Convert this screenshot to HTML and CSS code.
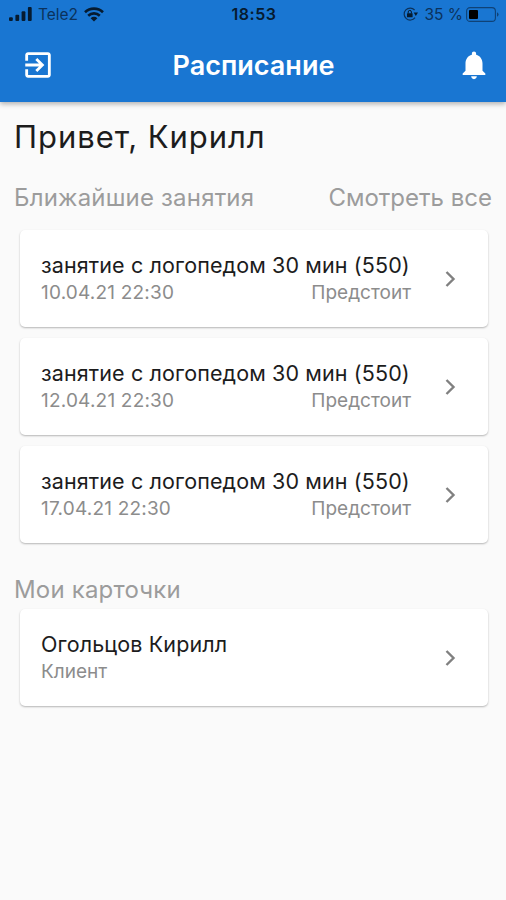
FILE: index.html
```html
<!DOCTYPE html>
<html lang="ru">
  <head>
    <meta charset="UTF-8" />
    <meta name="viewport" content="width=device-width, initial-scale=1.0" />
    <title>Расписание</title>
    <link rel="stylesheet" href="styles.css">
  </head>
  <body>
    <header>
      <div class="status">
        <div class="carrier">
          <svg class="signal" width="23" height="14" viewBox="0 0 23 14">
            <rect x="0" y="10.3" width="3.8" height="3.7" rx="1" />
            <rect x="6.4" y="7.8" width="3.8" height="6.2" rx="1" />
            <rect x="12.6" y="4.2" width="3.8" height="9.8" rx="1" />
            <rect x="18.9" y="0" width="3.8" height="14" rx="1" />
          </svg>
          <span class="operator">Tele2</span>
          <svg class="wifi" width="20" height="15" viewBox="0 0 20 15">
            <path d="M1 5.2a13 13 0 0 1 18 0M4.2 8.7a8.4 8.4 0 0 1 11.6 0" fill="none" stroke="#061b30" stroke-width="2.6" />
            <path d="M10 14.6 6.6 11.2a4.9 4.9 0 0 1 6.8 0z" />
          </svg>
        </div>
        <span class="time">18:53</span>
        <div class="power">
          <svg class="lock" width="15" height="14" viewBox="0 0 15 14">
            <path d="M11.6 3A6 6 0 1 0 12 10.6" fill="none" stroke="#0b325c" stroke-width="1.2" />
            <path d="M10.6 5.6H15l-2.2 3.4z" />
            <rect x="4" y="6.2" width="5.6" height="4" rx=".5" />
            <path d="M5.2 6.5V5a1.6 1.6 0 0 1 3.2 0v1.5" fill="none" stroke="#061b30" stroke-width="1" />
          </svg>
          <span class="percent">35 %</span>
          <svg class="battery" width="33" height="15" viewBox="0 0 33 15">
            <rect x=".6" y=".6" width="28.8" height="13.8" rx="3.5" fill="none" stroke="#0f4277" stroke-width="1.1" />
            <rect x="3" y="3" width="9" height="9" rx="1" fill="#000" />
            <path d="M31 5.3q1.6.7 1.6 2.2T31 9.7z" fill="#0f4277" />
          </svg>
        </div>
      </div>
      <nav>
        <svg class="exit" width="34" height="34" viewBox="0 0 24 24">
          <path d="M10.09 15.59 11.5 17l5-5-5-5-1.41 1.41L12.67 11H3v2h9.67l-2.58 2.59zM19 3H5c-1.11 0-2 .9-2 2v4h2V5h14v14H5v-4H3v4c0 1.1.89 2 2 2h14c1.1 0 2-.9 2-2V5c0-1.1-.9-2-2-2z" />
        </svg>
        <h1>Расписание</h1>
        <svg class="bell" width="34" height="34" viewBox="0 0 24 24">
          <path d="M12 22c1.1 0 2-.9 2-2h-4c0 1.1.89 2 2 2zm6-6v-5c0-3.07-1.64-5.64-4.5-6.32V4c0-.83-.67-1.5-1.5-1.5s-1.5.67-1.5 1.5v.68C7.63 5.36 6 7.92 6 11v5l-2 2v1h16v-1l-2-2z" />
        </svg>
      </nav>
    </header>

    <main>
      <h2>Привет, Кирилл</h2>

      <section>
        <div class="section-head">
          <h3 class="upcoming">Ближайшие занятия</h3>
          <a class="all">Смотреть все</a>
        </div>
        <div class="card">
          <div class="info">
            <div class="name">занятие с логопедом 30 мин (550)</div>
            <div class="meta"><span class="date">10.04.21 22:30</span><span class="state">Предстоит</span></div>
          </div>
          <svg class="chevron" width="11" height="16" viewBox="0 0 11 16"><path d="M1.5 1 8.5 8l-7 7" /></svg>
        </div>
        <div class="card">
          <div class="info">
            <div class="name">занятие с логопедом 30 мин (550)</div>
            <div class="meta"><span class="date">12.04.21 22:30</span><span class="state">Предстоит</span></div>
          </div>
          <svg class="chevron" width="11" height="16" viewBox="0 0 11 16"><path d="M1.5 1 8.5 8l-7 7" /></svg>
        </div>
        <div class="card">
          <div class="info">
            <div class="name">занятие с логопедом 30 мин (550)</div>
            <div class="meta"><span class="date">17.04.21 22:30</span><span class="state">Предстоит</span></div>
          </div>
          <svg class="chevron" width="11" height="16" viewBox="0 0 11 16"><path d="M1.5 1 8.5 8l-7 7" /></svg>
        </div>
      </section>

      <section class="clients">
        <h3 class="mine">Мои карточки</h3>
        <div class="card">
          <div class="info">
            <div class="name person">Огольцов Кирилл</div>
            <div class="meta"><span class="role">Клиент</span></div>
          </div>
          <svg class="chevron" width="11" height="16" viewBox="0 0 11 16"><path d="M1.5 1 8.5 8l-7 7" /></svg>
        </div>
      </section>
    </main>
  </body>
</html>
```
FILE: styles.css
```css
:root {
  --blue: #1976d2;
  --ink: #061b30;
}
* {
  box-sizing: border-box;
}
body {
  margin: 0;
  min-height: 100vh;
  font-family: Inter, "Liberation Sans", sans-serif;
  background: #fafafa;
  color: #1c1c1c;
}
svg {
  display: block;
  flex: none;
}
h1, h2, h3 {
  margin: 0;
  font-weight: 400;
  white-space: nowrap;
}
header {
  height: 102px;
  background: var(--blue);
  box-shadow: 0 2px 5px rgba(0, 0, 0, 0.3);
}
.status {
  display: grid;
  grid-template-columns: 1fr auto 1fr;
  align-items: center;
  height: 28px;
  padding: 0 7px 0 9px;
  font-size: 16px;
  line-height: 20px;
  color: #0b325c;
  fill: var(--ink);
}
.carrier, .power {
  display: flex;
  align-items: center;
}
.operator {
  margin: 0 6px 0 6px;
  padding-top: 2px;
  font-size: 15.5px;
}
.time {
  font-weight: 600;
  letter-spacing: 0.5px;
  color: var(--ink);
}
.power {
  justify-content: flex-end;
}
.lock {
  margin-right: 6px;
}
.percent {
  margin-right: 3px;
  padding-top: 2px;
  font-size: 15.5px;
}
nav {
  display: flex;
  align-items: center;
  justify-content: space-between;
  height: 74px;
  padding: 0 15px 0 21px;
  fill: #fff;
}
h1 {
  margin-right: 5px;
  font-size: 27px;
  font-weight: 600;
  color: #fff;
}
main {
  padding: 18px 14px 0;
}
h2 {
  font-size: 31px;
  line-height: 34px;
  letter-spacing: 0.95px;
}
.section-head {
  display: flex;
  justify-content: space-between;
  margin: 30px 0 18px;
}
h3, .all {
  font-size: 24px;
  line-height: 28px;
  color: #9c9c9c;
}
h3 {
  letter-spacing: 0.18px;
}
.card {
  display: flex;
  align-items: center;
  justify-content: space-between;
  height: 97px;
  margin: 0 4px 11px 6px;
  padding: 0 32px 0 21px;
  border-radius: 5px;
  background: #fff;
  box-shadow: 0 1px 2px rgba(0, 0, 0, 0.28);
}
.info {
  width: 370px;
  padding-top: 1px;
}
.name {
  font-size: 21.5px;
  line-height: 27px;
  letter-spacing: 0.12px;
  white-space: nowrap;
}
.meta {
  display: flex;
  justify-content: space-between;
  font-size: 19px;
  line-height: 28px;
  color: #8c8c8c;
}
.date {
  letter-spacing: 0.2px;
}
.chevron path {
  fill: none;
  stroke: #808080;
  stroke-width: 2.4;
}
.clients {
  margin-top: 33px;
}
.mine {
  margin-bottom: 5px;
}
```
